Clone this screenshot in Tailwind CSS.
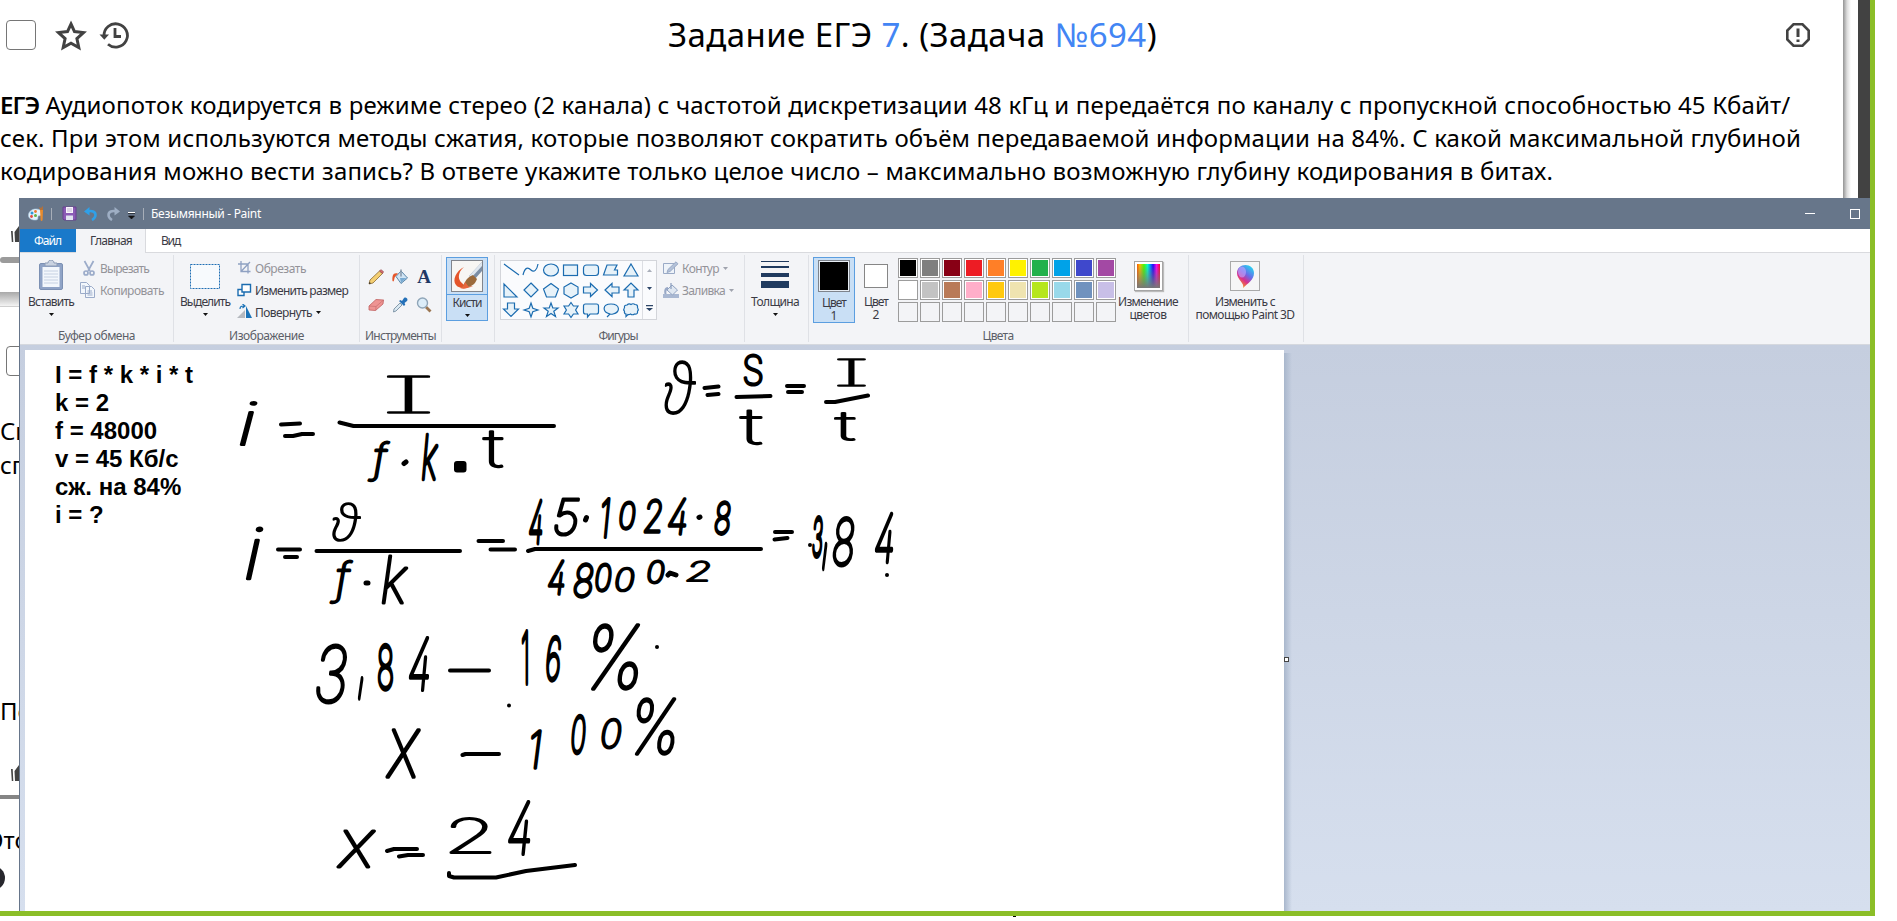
<!DOCTYPE html>
<html lang="ru">
<head>
<meta charset="utf-8">
<title>Задание ЕГЭ 7</title>
<script src="https://cdn.jsdelivr.net/npm/@tailwindcss/browser@4"></script>
</head>
<body class="relative h-[921px] w-[1897px] overflow-hidden bg-white font-['Noto_Sans','Open_Sans',sans-serif] text-black">

<!-- Task page -->
<header class="flex h-[70px] w-[1843px] items-center">
  <div class="ml-[6px] h-[30px] w-[30px] rounded-[4px] border border-[#767676] bg-white"></div>
  <svg class="ml-[19px] h-8 w-8" viewBox="0 0 32 32" fill="none" stroke="#424242" stroke-width="3" stroke-linejoin="miter"><path d="M16 5l3.500 7.600 9 1-6.600 6 1.900 8.900L16 24.200l-7.800 4.300 1.900-8.900-6.600-6 9-1z"/></svg>
  <svg class="ml-[12px] h-8 w-8" viewBox="0 0 32 32" fill="none" stroke="#424242" stroke-width="2.800"><path d="M5 17A11.700 11.700 0 1 1 9 25.300M16 9v8.500h6"/><path d="M0.500 15.500h9.500l-4.700 5.200z" fill="#424242" stroke="none"/></svg>
  <h1 class="ml-[537px] flex w-[490px] text-[33px] leading-[42px] whitespace-nowrap"><span data-w="489">Задание ЕГЭ <span class="text-[#4285f4]">7</span>. (Задача <span class="text-[#4285f4]">№694</span>)</span></h1>
  <svg class="ml-auto mr-[32px] h-[26px] w-[26px]" viewBox="0 0 26 26" fill="none" stroke="#424242" stroke-width="2.600"><path d="M8.500 2.300h9l6.200 6.200v9l-6.200 6.200h-9l-6.200-6.200v-9z"/><path d="M13 6.500v8.500M13 17.500v2.600" stroke-width="3"/></svg>
</header>
<main class="mt-[18px] text-[24px] leading-[33px] whitespace-nowrap">
  <p><span data-w="1791"><b class="font-semibold tracking-[-1px]">ЕГЭ</b> Аудиопоток кодируется в режиме стерео (2 канала) с частотой дискретизации 48 кГц и передаётся по каналу с пропускной способностью 45 Кбайт/</span></p>
  <p><span data-w="1801">сек. При этом используются методы сжатия, которые позволяют сократить объём передаваемой информации на 84%. С какой максимальной глубиной</span></p>
  <p><span data-w="1553">кодирования можно вести запись? В ответе укажите только целое число – максимально возможную глубину кодирования в битах.</span></p>
</main>
<div class="absolute top-0 left-[1843px] h-[198px] w-[8px] bg-linear-to-r from-[#949494] via-[#dcdcdc] to-white"></div>
<div class="absolute top-0 left-[1858px] h-[198px] w-[12px] bg-[#424242]"></div>

<!-- Lower part of the page, visible at the left of the Paint window -->
<aside class="absolute top-[198px] left-0 h-[713px] w-[19px] overflow-hidden text-[24px] leading-[33px] whitespace-nowrap">
  <svg class="absolute top-[28px] left-[11px] h-5 w-6" viewBox="0 0 24 20" fill="#424242"><path d="M0 5h1.700l.6 11H.8zM3.500 6L8 0h4v16H4z"/></svg>
  <div class="absolute top-[59px] left-0 h-[6px] w-6 rounded-l bg-[#9b9b9b]"></div>
  <div class="absolute top-[94px] left-0 h-[15px] w-6 border-b border-[#cfcfcf] bg-linear-to-b from-[#a9a9a9] to-[#f4f4f4]"></div>
  <div class="absolute top-[148px] left-[6px] h-[30px] w-[30px] rounded-[4px] border border-[#767676]"></div>
  <div class="absolute top-[216px] left-0">Сп</div>
  <div class="absolute top-[250px] left-0">сп</div>
  <div class="absolute top-[496px] left-0">По</div>
  <svg class="absolute top-[567px] left-[11px] h-5 w-6" viewBox="0 0 24 20" fill="#424242"><path d="M0 4h1.700l.6 12H.8zM3.500 6L8 0h4v16H4z"/></svg>
  <div class="absolute top-[597px] left-0 h-[4px] w-6 bg-[#858585]"></div>
  <div class="absolute top-[625px] left-[-12px]">Это</div>
  <div class="absolute top-[668px] left-[-19px] h-6 w-6 rounded-full bg-[#27272d]"></div>
</aside>

<!-- Paint window -->
<section class="absolute top-[198px] left-[19px] h-[713px] w-[1851px] overflow-hidden border-l border-[#66758a] bg-[#f3f4f7] text-[12px] leading-[13px] text-[#3b3b45]">

  <!-- Title bar -->
  <div class="flex h-[31px] items-center bg-[#67768a] text-white">
    <svg class="ml-[8px] h-4 w-4" viewBox="0 0 16 16"><path d="M8 3c5 0 6 3 5.500 5.500-.5 2-3 .5-3.500 2-.3 2 .5 3.500-3 3.500C2.500 14 0 11.500.500 8.500 1 5 4.500 3 8 3z" fill="#e4f2fc" stroke="#a8c9e2" stroke-width=".6"/><circle cx="4" cy="7" r="1.500" fill="#2e9ad8"/><circle cx="7.500" cy="5.500" r="1.400" fill="#f0782e"/><circle cx="3.500" cy="10.500" r="1.400" fill="#e24b45"/><circle cx="7.500" cy="9.500" r="1.500" fill="#62b246"/><path d="M12 4l3 0-.4 10c-.6 1.500-1.800 1-2 0z" fill="#e88b2d"/><path d="M12 4l-1-3 2 1 2-2v4z" fill="#b3713a"/></svg>
    <span class="ml-[7px] h-3 w-px bg-[#a7aeb8]"></span>
    <svg class="ml-[10px] h-[15px] w-[15px]" viewBox="0 0 15 15"><path d="M1 1h13v13H2l-1-1z" fill="#8a5bb5" stroke="#68418f"/><path d="M4 1h7v6H4z" fill="#f8f4fc"/><path d="M4 9.500h7V14H4z" fill="#dfe3ef"/><path d="M5 3h5M5 5h5" stroke="#c3b8d3"/></svg>
    <svg class="ml-[7px] h-[14px] w-[14px]" viewBox="0 0 14 14" fill="none" stroke="#2fa0e8" stroke-width="2.500"><path d="M3 4.500c5-1.200 8.500 0 8.500 3.500 0 2.500-1.500 3.800-3.500 5"/><path d="M5.500 0v8.500L0 4.500z" fill="#2fa0e8" stroke="none"/></svg>
    <svg class="ml-[8px] h-[14px] w-[14px]" viewBox="0 0 14 14" fill="none" stroke="#9eaec4" stroke-width="2.500"><path d="M11 4.500C6 3.300 2.500 4.500 2.500 8c0 2.500 1.500 3.800 3.500 5"/><path d="M8.500 0v8.500L14 4.500z" fill="#9eaec4" stroke="none"/></svg>
    <svg class="ml-[8px] mt-[3px] h-[7px] w-[7px]" viewBox="0 0 7 7"><path d="M0 .500h7" stroke="#fff"/><path d="M0 1.500h7M.5 4h6L3.500 7z" fill="#111" stroke="#111" stroke-width=".6"/></svg>
    <span class="ml-[8px] h-3 w-px bg-[#a7aeb8]"></span>
    <span class="ml-[7px] whitespace-nowrap" data-w="110">Безымянный - Paint</span>
    <span class="ml-auto h-px w-[10px] bg-white"></span>
    <span class="mr-[10px] ml-[35px] h-[10px] w-[10px] border border-white"></span>
  </div>

  <!-- Tabs -->
  <nav class="flex h-[24px] border-b border-[#d9dade] bg-white leading-[23px]">
    <div class="w-[56px] bg-[#1979ca] pl-[14px] text-white"><span data-w="27">Файл</span></div>
    <div class="-mb-px h-[24px] w-[70px] border-r border-[#d9dade] bg-[#f3f4f7] pl-[14px]"><span data-w="42">Главная</span></div>
    <div class="pl-[15px]"><span data-w="19">Вид</span></div>
  </nav>

  <!-- Ribbon -->
  <div class="flex h-[92px] border-b border-[#d5d8de] pt-[2px] whitespace-nowrap">
    <!-- Clipboard -->
    <div class="flex h-[87px] w-[154px] shrink-0 flex-col border-r border-[#dfe1e6]">
      <div class="flex h-[74px]">
        <div class="flex w-[62px] flex-col items-center pt-[5px]">
          <svg class="h-[30px] w-6" viewBox="0 0 24 30"><rect x="0.500" y="3.500" width="23" height="26" rx="1.500" fill="#8fa3c6" stroke="#7c90b3"/><path d="M3.500 7h17v20h-17z" fill="#f3f7fc"/><path d="M5 11h14M5 14h14M5 17h14M5 20h14M5 23h14" stroke="#c6d1e2"/><path d="M6 3h3c0-4 6-4 6 0h3v3H6z" fill="#c9d2e0" stroke="#8d9cb6"/></svg>
          <span class="mt-[5px]" data-w="46">Вставить</span>
          <svg class="mt-[5px] h-[3px] w-[5px]" viewBox="0 0 5 3"><path d="M0 0h5L2.500 3z" fill="#111"/></svg>
        </div>
        <div class="flex flex-col gap-[4px] pt-[4px] text-[#939399]">
          <div class="flex h-[18px] items-center"><svg class="h-4 w-[18px]" viewBox="0 0 18 16" fill="none" stroke="#9babc9" stroke-width="1.700"><path d="M2.500 1l5.500 10M11.500 1L6 11"/><circle cx="4" cy="13" r="2"/><circle cx="10" cy="13" r="2"/></svg><span data-w="49">Вырезать</span></div>
          <div class="flex h-[18px] items-center"><svg class="-ml-[2px] h-4 w-5" viewBox="0 0 20 16" fill="#f3f7fc" stroke="#9babc9"><path d="M.5.500h6l3 3v8h-9zM5.500 4.500h6l3 3v8h-9z"/><path d="M7.500 9h4.500M7.500 11h5M7.500 13h5M2 4h3M2 6h3"/></svg><span data-w="64">Копировать</span></div>
        </div>
      </div>
      <div class="text-center text-[#5c5f68]"><span data-w="77">Буфер обмена</span></div>
    </div>
    <!-- Image -->
    <div class="flex h-[87px] w-[186px] shrink-0 flex-col border-r border-[#dfe1e6]">
      <div class="flex h-[74px]">
        <div class="flex w-[62px] flex-col items-center pt-[9px]">
          <svg class="h-[25px] w-[30px]" viewBox="0 0 30 25"><rect x=".5" y=".5" width="29" height="24" fill="#f7fafd" stroke="#1f6fb5" stroke-dasharray="2 1"/></svg>
          <span class="mt-[6px]" data-w="50">Выделить</span>
          <svg class="mt-[5px] h-[3px] w-[5px]" viewBox="0 0 5 3"><path d="M0 0h5L2.500 3z" fill="#111"/></svg>
        </div>
        <div class="ml-px flex flex-col gap-[4px] pt-[4px]">
          <div class="flex h-[18px] items-center text-[#939399]"><svg class="h-4 w-[18px]" viewBox="0 0 18 16" fill="none" stroke="#8fa1c2" stroke-width="1.300"><path d="M4 1v10.500h9.500M1 4h10v9.500M4 11.500L13 2"/></svg><span data-w="51">Обрезать</span></div>
          <div class="flex h-[18px] items-center"><svg class="h-4 w-[18px]" viewBox="0 0 18 16" fill="#fff" stroke="#1b6cb0" stroke-width="1.400"><path d="M1 7.500h6v6H1z"/><path d="M5 2.500h8.500v7.500H5z"/></svg><span data-w="93">Изменить размер</span></div>
          <div class="flex h-[18px] items-center"><svg class="h-4 w-[18px]" viewBox="0 0 18 16"><path d="M0 14h8V6z" fill="#b5b9bf"/><path d="M9 14h6L9 2z" fill="#1b73b8"/><path d="M3 5c0-3 2-3 4-3M5.500 0L8 2 5.500 4" fill="none" stroke="#1b73b8" stroke-width="1.200"/></svg><span data-w="57">Повернуть</span><svg class="ml-[4px] h-[3px] w-[5px]" viewBox="0 0 5 3"><path d="M0 0h5L2.500 3z" fill="#111"/></svg></div>
        </div>
      </div>
      <div class="text-center text-[#5c5f68]"><span data-w="75">Изображение</span></div>
    </div>
    <!-- Tools -->
    <div class="flex h-[87px] w-[82px] shrink-0 flex-col border-r border-[#dfe1e6]">
      <div class="grid h-[74px] grid-cols-[repeat(3,16px)] content-start gap-x-[8px] gap-y-[12px] pt-[14px] pl-[8px]">
        <svg class="h-4 w-4" viewBox="0 0 16 16"><path d="M1 15l1-4L11.500 2l3 2.500L5 14z" fill="#f4cf73" stroke="#8a6a34" stroke-width=".8"/><path d="M11.500 2L13 .7l2.500 2-1 1.800z" fill="#d86c70" stroke="#94474c" stroke-width=".7"/><path d="M1 15l.5-2 1.500 1.300z" fill="#222"/></svg>
        <svg class="h-4 w-4" viewBox="0 0 16 16"><path d="M4 7.500L9 2l6.500 7L9 14.500z" fill="#cfe4f5" stroke="#5b86a8"/><path d="M8 9l6.500 0L9 14z" fill="#78aad2"/><path d="M9 .5v7" stroke="#8797a8" stroke-width="1.500"/><path d="M6 4.500C1 3 0 7 .5 12c1 1 1.500 0 1.800-2C2.500 7.500 4 7 6 4.500z" fill="#e5552a"/></svg>
        <span class="-mt-px h-4 w-4 text-center font-['Liberation_Serif',serif] text-[19px] leading-[18px] font-bold text-[#1f3864]">A</span>
        <svg class="h-4 w-4" viewBox="0 0 16 16"><path d="M1 9l7-6.500 7.500.5-.5 4-7.500 6.500L1 13z" fill="#ee9493" stroke="#c0605f" stroke-width=".8"/><path d="M1 9l7 .5 7.500-6.500M8 9.500l-.3 4" fill="none" stroke="#c96f6e" stroke-width=".7"/></svg>
        <svg class="h-4 w-4" viewBox="0 0 16 16"><path d="M1.500 15l.5-3 6-6 2 2-6 6z" fill="#d9e8f2" stroke="#7890a3" stroke-width=".9"/><path d="M7 4l1.500-1 1.500 1L12 1c2-1.500 4.500 1 3 3l-2.500 2 .8 1.500L12 9z" fill="#2470b8"/></svg>
        <svg class="h-4 w-4" viewBox="0 0 16 16"><path d="M10 10l4.500 4.500" stroke="#9b7652" stroke-width="2.800"/><circle cx="6.500" cy="6" r="5" fill="#dcedf9" stroke="#8fa5b8" stroke-width="1.400"/></svg>
      </div>
      <div class="text-center text-[#5c5f68]"><span data-w="71">Инструменты</span></div>
    </div>
    <!-- Brushes -->
    <div class="h-[87px] w-[53px] shrink-0 border-r border-[#dfe1e6] pt-[2px] pl-[4px]">
      <div class="flex h-[64px] w-[42px] flex-col items-center border border-[#5b9ee0] bg-[#c9dff5]">
        <div class="flex h-[37px] w-full justify-center border-b border-[#5b9ee0] pt-[2px]">
          <svg class="h-8 w-8" viewBox="0 0 32 32"><rect x=".5" y=".5" width="31" height="31" fill="#f7f6f3" stroke="#81858c"/><path d="M13 7C5 11 1 20 5 25c3 4 11 4 17 1-5 1-9 0-11-3C7 20 6 13 13 7z" fill="#e4552a"/><path d="M31 2v9l-8 9-5-4z" fill="#7c8fa6"/><path d="M31 2L18 16l2.500 1.500L31 6z" fill="#dfe7ef"/><path d="M22 15l4 4c-2 6-7 9-15 8 3-3 3-9 11-12z" fill="#9b6a3a"/><path d="M9 28c3-1 4-3 5-6l4 5c-3 2-6 2-9 1z" fill="#e8673c"/></svg>
        </div>
        <span class="mt-px" data-w="29">Кисти</span>
        <svg class="mt-[5px] h-[3px] w-[5px]" viewBox="0 0 5 3"><path d="M0 0h5L2.500 3z" fill="#111"/></svg>
      </div>
    </div>
    <!-- Shapes -->
    <div class="flex h-[87px] w-[250px] shrink-0 flex-col border-r border-[#dfe1e6]">
      <div class="flex h-[74px]">
        <div class="mt-[5px] ml-[5px] flex h-[60px] w-[157px] border border-[#d3d5da] bg-[#fafbfd]">
          <svg class="h-[58px] w-[141px] shrink-0" viewBox="0 0 141 58" fill="#e7f2f9" stroke="#1b6cb0" stroke-width="1.200">
            <path d="M3 3l15 11M22 14c2-8 5-8 8-5s6 0 7-6" fill="none"/>
            <ellipse cx="50" cy="9" rx="7.500" ry="6"/><rect x="62.500" y="4" width="14" height="10.500"/><rect x="82.500" y="4" width="15" height="10.500" rx="3"/>
            <path d="M106 4h10l-2.500 5h3v5h-14zM130 3l7 12h-14z"/>
            <path d="M3 23v13h13zM30 22l7 7-7 7-7-7zM50 22.500l7.500 5.500-3 8h-9l-3-8zM70 22l7 4v7l-7 4-7-4v-7zM82.500 26h7v-3.500l7 6.500-7 6.500V32h-7zM118 26h-7v-3.500l-7 6.500 7 6.500V32h7zM127 36v-7h-4l7-7 7 7h-4v7z"/>
            <path d="M6.500 42v6h-4l7.500 7.500 7.500-7.500h-4v-6zM30 42l1.800 5.200L37 49l-5.200 1.800L30 56l-1.800-5.200L23 49l5.200-1.800zM50 42l1.800 5h5.200l-4.200 3.300 1.700 5.200-4.500-3-4.500 3 1.700-5.200L43 47h5.200zM70 41.500l2.400 3.500H77l-2.400 4 2.400 4h-4.600L70 56.500 67.600 53H63l2.400-4-2.400-4h4.600z"/>
            <path d="M84.500 43h11q2 0 2 2v6q0 2-2 2H89l-2.500 3v-3h-2q-2 0-2-2v-6q0-2 2-2zM109 53c-8-2-8-10 1-10s10 8 2 10c-2 .5-3 0-3 0l-3 3z"/>
            <path d="M126 44q2-2 4-.500 2-1.500 4 0 3 0 2.500 3 1.500 2 0 4 .5 3-3 2.500-2 1.500-4 0-1.500 1-2.500.5l-2 2v-2.500q-2-.5-1.500-2.500-1.500-2 0-4-.5-2.500 2.500-2.500z"/>
          </svg>
          <div class="flex flex-1 flex-col items-center justify-around border-l border-[#dcdee3]">
            <svg class="h-[3px] w-[5px]" viewBox="0 0 5 3"><path d="M0 3h5L2.500 0z" fill="#a9afba"/></svg>
            <svg class="h-[3px] w-[5px]" viewBox="0 0 5 3"><path d="M0 0h5L2.500 3z" fill="#2d4668"/></svg>
            <svg class="h-[6px] w-[7px]" viewBox="0 0 7 6"><path d="M0 0h7v1.200H0zM0 3h7L3.500 6z" fill="#2d4668"/></svg>
          </div>
        </div>
        <div class="ml-[6px] flex flex-col gap-[4px] pt-[4px] text-[#939399]">
          <div class="flex h-[18px] items-center"><svg class="mr-[3px] h-[14px] w-4" viewBox="0 0 16 14" fill="#eef3f9" stroke="#9aaac6"><path d="M.5 2.500h11v10H.5z"/><path d="M4 11.500l1-3L13 .8l2 2L7 10.500z" fill="#b3c1d8"/></svg><span data-w="37">Контур</span><svg class="ml-[4px] h-[3px] w-[5px]" viewBox="0 0 5 3"><path d="M0 0h5L2.500 3z" fill="#9fa3ad"/></svg></div>
          <div class="flex h-[18px] items-center"><svg class="mr-[3px] h-[15px] w-4" viewBox="0 0 16 15"><path d="M0 11h16v4H0z" fill="#a9b8d2"/><path d="M4 7l5-5 5.500 5-5 5z" fill="#dfe7f1" stroke="#8fa1c0"/><path d="M8 0v6" stroke="#8fa1c0" stroke-width="1.300"/><path d="M5 4C1 4 1 8 1.500 11h2C3 8 3.500 7 5 6z" fill="#98a8c6"/></svg><span data-w="43">Заливка</span><svg class="ml-[4px] h-[3px] w-[5px]" viewBox="0 0 5 3"><path d="M0 0h5L2.500 3z" fill="#9fa3ad"/></svg></div>
        </div>
      </div>
      <div class="pr-[3px] text-center text-[#5c5f68]"><span data-w="39">Фигуры</span></div>
    </div>
    <!-- Size -->
    <div class="flex h-[87px] w-[64px] shrink-0 flex-col items-center border-r border-[#dfe1e6] pt-[6px] pr-[3px]">
      <div class="h-px w-7 bg-[#1f3a5f]"></div>
      <div class="mt-[4px] h-[2px] w-7 bg-[#1f3a5f]"></div>
      <div class="mt-[5px] h-[4px] w-7 bg-[#1f3a5f]"></div>
      <div class="mt-[4px] h-[7px] w-7 bg-[#1f3a5f]"></div>
      <span class="mt-[7px]" data-w="48">Толщина</span>
      <svg class="mt-[5px] h-[3px] w-[5px]" viewBox="0 0 5 3"><path d="M0 0h5L2.500 3z" fill="#111"/></svg>
    </div>
    <!-- Colors -->
    <div class="flex h-[87px] w-[380px] shrink-0 flex-col border-r border-[#dfe1e6] pl-[4px]">
      <div class="flex h-[74px]">
        <div class="mt-[2px] flex h-[66px] w-[42px] flex-col items-center border border-[#5b9ee0] bg-[#c9dff5] pt-[2px] text-center">
          <div class="h-8 w-8 border border-[#7e848d] bg-black shadow-[inset_0_0_0_1px_#e8eef5]"></div>
          <span class="mt-[4px]"><span data-w="24">Цвет</span><br>1</span>
        </div>
        <div class="flex w-[42px] flex-col items-center pt-[9px] text-center">
          <div class="h-6 w-6 border border-[#868686] bg-white"></div>
          <span class="mt-[7px]"><span data-w="24">Цвет</span><br>2</span>
        </div>
        <div class="mt-[3px] ml-px grid h-[65px] grid-cols-10 content-start gap-[2px] *:h-[20px] *:w-[20px] *:border *:border-[#9c9c9c]">
          <i class="bg-[#000] shadow-[inset_0_0_0_1px_#fff]"></i><i class="bg-[#7f7f7f] shadow-[inset_0_0_0_1px_#fff]"></i><i class="bg-[#880015] shadow-[inset_0_0_0_1px_#fff]"></i><i class="bg-[#ed1c24] shadow-[inset_0_0_0_1px_#fff]"></i><i class="bg-[#ff7f27] shadow-[inset_0_0_0_1px_#fff]"></i><i class="bg-[#fff200] shadow-[inset_0_0_0_1px_#fff]"></i><i class="bg-[#22b14c] shadow-[inset_0_0_0_1px_#fff]"></i><i class="bg-[#00a2e8] shadow-[inset_0_0_0_1px_#fff]"></i><i class="bg-[#3f48cc] shadow-[inset_0_0_0_1px_#fff]"></i><i class="bg-[#a349a4] shadow-[inset_0_0_0_1px_#fff]"></i>
          <i class="bg-[#fff]"></i><i class="bg-[#c3c3c3] shadow-[inset_0_0_0_1px_#fff]"></i><i class="bg-[#b97a57] shadow-[inset_0_0_0_1px_#fff]"></i><i class="bg-[#ffaec9] shadow-[inset_0_0_0_1px_#fff]"></i><i class="bg-[#ffc90e] shadow-[inset_0_0_0_1px_#fff]"></i><i class="bg-[#efe4b0] shadow-[inset_0_0_0_1px_#fff]"></i><i class="bg-[#b5e61d] shadow-[inset_0_0_0_1px_#fff]"></i><i class="bg-[#99d9ea] shadow-[inset_0_0_0_1px_#fff]"></i><i class="bg-[#7092be] shadow-[inset_0_0_0_1px_#fff]"></i><i class="bg-[#c8bfe7] shadow-[inset_0_0_0_1px_#fff]"></i>
          <i></i><i></i><i></i><i></i><i></i><i></i><i></i><i></i><i></i><i></i>
        </div>
        <div class="ml-px flex w-[62px] flex-col items-center pt-[6px] text-center">
          <div class="h-[30px] w-[29px] border border-[#a5a5a5] bg-white p-[2px] shadow-[1px_1px_1px_#bbb]"><div class="h-full w-full bg-[linear-gradient(to_top,#777_0%,#7770_100%),linear-gradient(to_right,#f50,#fb0_12%,#4f0_30%,#0fc_46%,#08f_58%,#20f_70%,#f0e_85%,#f02)]"></div></div>
          <span class="mt-[4px]"><span data-w="60">Изменение</span><br><span data-w="37">цветов</span></span>
        </div>
      </div>
      <div class="pr-[5px] text-center text-[#5c5f68]"><span data-w="31">Цвета</span></div>
    </div>
    <!-- Paint 3D -->
    <div class="flex h-[87px] w-[115px] shrink-0 flex-col items-center border-r border-[#dfe1e6] pt-[6px] pr-[2px] text-center">
      <div class="h-[30px] w-[30px] border border-[#a9a9a9] bg-[#f6f6f6] p-[2px]">
        <svg class="h-6 w-6" viewBox="0 0 24 24"><defs><linearGradient id="drop" x1="0.800" y1="0" x2="0.200" y2="1"><stop offset="0" stop-color="#20dcf0"/><stop offset=".4" stop-color="#6a6be8"/><stop offset=".65" stop-color="#d92f8d"/><stop offset="1" stop-color="#ffb000"/></linearGradient></defs><path d="M10 24c2-5-6-8-6-15C4 4 8 1 12.500 1S21 4 21 9c0 7-6 10-11 15z" fill="url(#drop)"/><ellipse cx="9" cy="8" rx="4" ry="5.500" fill="#c5a8ff" opacity=".6"/></svg>
      </div>
      <span class="mt-[4px]"><span data-w="60">Изменить с</span><br><span data-w="99">помощью Paint 3D</span></span>
    </div>
  </div>

  <!-- Work area -->
  <div class="relative h-[566px] bg-linear-to-b from-[#c5cedf] to-[#d6dfee]">
    <div class="absolute top-[5px] left-[5px] h-[561px] w-[1259px] bg-white">
      <p class="pt-[11px] pl-[30px] font-['Liberation_Sans',Arial,sans-serif] text-[24px] leading-[28px] font-bold text-black">I = f * k * i * t<br>k = 2<br>f = 48000<br>v = 45 Кб/с<br>сж. на 84%<br>i = ?</p>
    </div>
    <div class="absolute top-[8px] left-[1264px] h-[558px] w-[8px] bg-linear-to-r from-[#a9b7cc] to-transparent"></div>
    <div class="absolute top-[312px] left-[1264px] h-[5px] w-[5px] border border-[#444] bg-white"></div>
    <!-- Brush strokes and characters placed freely on the drawing -->
    <svg class="absolute top-0 left-0 h-[566px] w-[1300px]" viewBox="20 345 1300 566">
      <g fill="none" stroke="#000" stroke-width="4" stroke-linecap="round" stroke-linejoin="round">
        <path d="M281 424.500l19-1M285 436h8l9-2h11M339.500 422.500l14 3.500h200.500"/>
        <path d="M278 549.500h22M285 557h12M316.500 551H460M478.500 541H503M490.500 549.500H515M528 551l7-2H761"/>
        <path d="M704.500 388l14-1.500M707.500 395l11-1M736.500 397l34-1M787 386h17M788 392h14M826 402h9l33-6.500"/>
        <path d="M775 532h17M774.500 539.500l13-1.500"/>
        <path d="M450 670.500h39M462.500 755l3-1H499M387 851l7-2h23M399 856.500l9-1.500h15M449 873v3l5 1.500h42l30-6.500 49-6"/>
        <path d="M404 463.500l2-1.500M366 583h2M585.500 520l1-2.500M699 517.500l1-.5M668 575l2-2 6 2" stroke-width="5"/>
      </g>
      <rect x="454" y="461" width="12.500" height="11.500" rx="3"/>
      <circle cx="810" cy="545" r="2"/><circle cx="887" cy="575" r="2"/><circle cx="657" cy="647" r="2"/><circle cx="509" cy="705.500" r="2"/>
      <g id="ink"></g>
    </svg>
  </div>
</section>

<!-- Capture frame -->
<div class="absolute top-0 left-[1870px] h-[916px] w-[5px] bg-[#8bbe28]"></div>
<div class="absolute top-[911px] left-0 h-[5px] w-[1875px] bg-[#8bbe28]"></div>
<div class="absolute top-[916px] left-[1013px] h-px w-[3px] bg-black"></div>

<script>
// Adjust tracking so that each label takes its nominal width.
function fit() {
  document.querySelectorAll('[data-w]').forEach(function (el) {
    el.style.letterSpacing = '0px';
    var range = document.createRange();
    range.selectNodeContents(el);
    var w = range.getBoundingClientRect().width;
    el.style.letterSpacing = ((+el.dataset.w - w) / el.textContent.length) + 'px';
  });
}
// Characters on the drawing: text, left, top, right, bottom of the inked box, font.
var A = 'italic 100 48px Inter', G = 'italic 100 48px "Noto Sans"', R = '100 48px Inter';
var chars = [
  ['i',239,398,258,446,A],['I',385,374,432,414,R],['f',367,439,391,482,A],['k',421,433,439,480,A],['t',482,429,504,470,R],
  ['i',245,523,264,580,A],['ϑ',331,501,362,542,G],['f',329,558,354,604,A],['k',381,554,409,604,A],
  ['ϑ',663,360,697,414,G],['S',743,353,763,387,R],['t',739,408,763,447,R],['I',836,357,867,387,R],['t',834,410,856,442,R],
  ['4',528,499,543,544,A],['5',553,498,581,538,A],['1',601,497,611,538,A],['0',618,500,637,531,A],['2',643,497,663,533,A],['4',667,497,687,535,A],['8',713,500,732,536,A],
  ['4',547,559,565,595,A],['8',572,562,595,599,A],['0',594,562,613,593,A],['0',614,566,636,593,A],['0',646,559,666,585,A],['2',686,559,711,582,A],
  ['3',811,516,824,559,A],[',',821,543,828,570,A],['8',831,516,856,568,A],['4',874,512,894,563,A],
  ['3',314,643,349,705,A],[',',357,676,364,699,A],['8',377,643,394,692,R],['4',408,636,430,691,A],['1',521,630,529,684,R],['6',545,635,562,683,A],['%',590,623,641,690,A],
  ['x',385,727,422,778,A],['1',530,729,542,769,A],['0',570,714,587,756,A],['0',600,717,623,750,A],['%',634,697,677,755,A],
  ['x',336,828,377,868,A],['2',449,815,492,854,R],['4',507,800,531,855,A]
];
var ctx = document.createElement('canvas').getContext('2d'), ink = document.getElementById('ink');
function drawInk() {
  ink.replaceChildren();
  chars.forEach(function (c) {
    ctx.font = c[5];
    var m = ctx.measureText(c[0]), l = -m.actualBoundingBoxLeft, r = m.actualBoundingBoxRight,
        t = -m.actualBoundingBoxAscent, b = m.actualBoundingBoxDescent, p = 1.5;
    if (c[0] === 'I') { var mid = (l + r) / 2; l = mid - 7; r = mid + 7; }
    var sx = (c[3] - c[1] - 2 * p) / (r - l), sy = (c[4] - c[2] - 2 * p) / (b - t);
    var x = c[1] + p - l * sx;
    var e = document.createElementNS('http://www.w3.org/2000/svg', 'text');
    e.textContent = c[0];
    if (c[0] === 'I') { x = (c[1] + c[3]) / 2; e.setAttribute('text-anchor', 'middle'); }
    e.setAttribute('transform', 'matrix(' + [sx, 0, 0, sy, x, c[2] + p - t * sy].join(' ') + ')');
    e.style.font = c[5];
    e.style.fontFeatureSettings = '"cv02", "cv08"';
    e.setAttribute('stroke', '#000');
    e.setAttribute('stroke-width', (c[5] === G ? 1.8 : 2.9) / (Math.pow(sx, 0.65) * Math.pow(sy, 0.35)));
    e.setAttribute('stroke-linejoin', 'round');
    ink.appendChild(e);
  });
}
drawInk();
window.addEventListener('load', function () { fit(); drawInk(); });
</script>
</body>
</html>
